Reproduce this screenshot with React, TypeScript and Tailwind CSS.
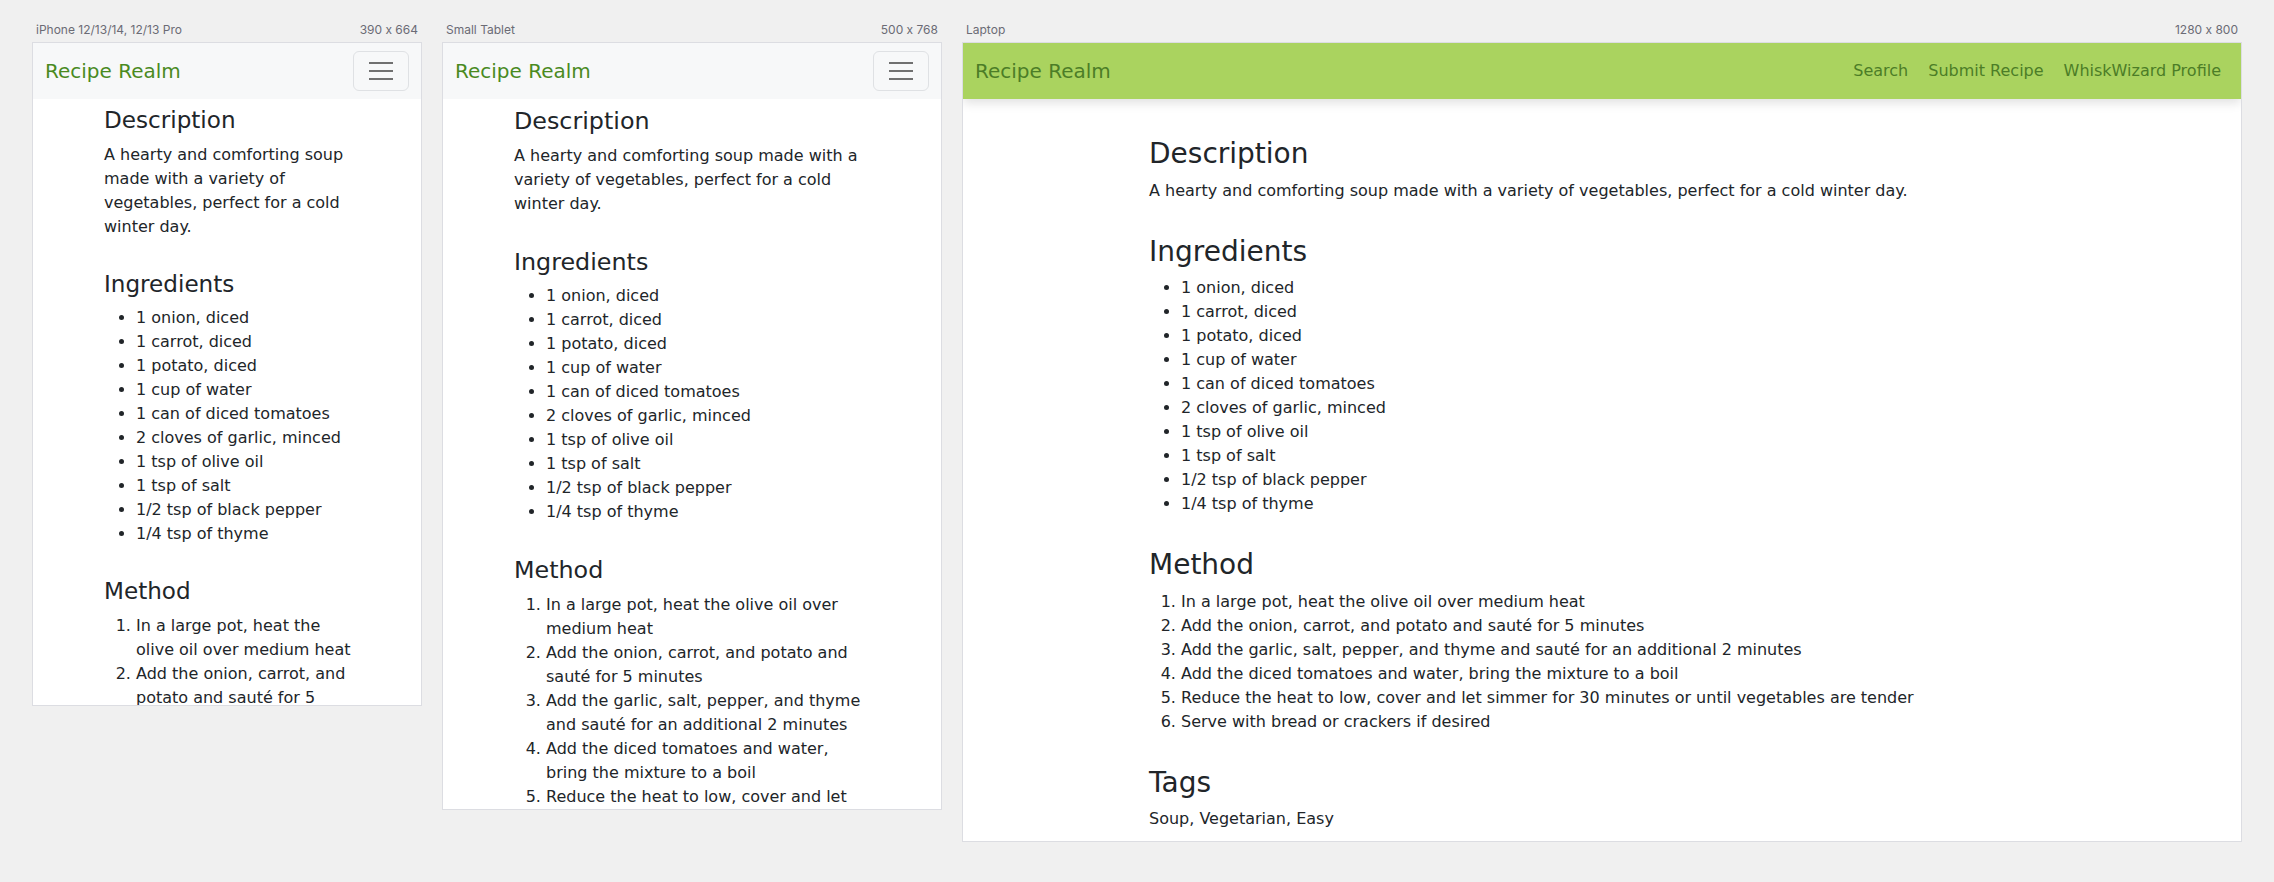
import React from "react";

const INGREDIENTS = [
    "1 onion, diced",
    "1 carrot, diced",
    "1 potato, diced",
    "1 cup of water",
    "1 can of diced tomatoes",
    "2 cloves of garlic, minced",
    "1 tsp of olive oil",
    "1 tsp of salt",
    "1/2 tsp of black pepper",
    "1/4 tsp of thyme",
];

const STEPS = [
    "In a large pot, heat the olive oil over medium heat",
    "Add the onion, carrot, and potato and sauté for 5 minutes",
    "Add the garlic, salt, pepper, and thyme and sauté for an additional 2 minutes",
    "Add the diced tomatoes and water, bring the mixture to a boil",
    "Reduce the heat to low, cover and let simmer for 30 minutes or until vegetables are tender",
    "Serve with bread or crackers if desired",
];

const NAV_LINKS = [ "Search", "Submit Recipe", "WhiskWizard Profile" ];

/**
 * Preview frame with the device name and viewport size above it
 */
function Device(props: { name: string; size: string; frameClass: string; children: React.ReactNode }) {
    return (
        <div className="flex shrink-0 flex-col gap-1">
            {/* calt off, otherwise Inter turns "390 x 664" into a multiplication sign */}
            <div className="flex justify-between px-1 font-['Inter',sans-serif] text-[12px] leading-4 text-[#6b6b75] [font-feature-settings:'calt'_0]">
                <span>{props.name}</span>
                <span>{props.size}</span>
            </div>
            <div className={`overflow-hidden border border-[#dcdde2] bg-white ${props.frameClass}`}>
                {props.children}
            </div>
        </div>
    );
}

function CollapsedNav() {
    return (
        <nav className="flex h-14 items-center justify-between bg-[#f7f8f9] px-3">
            <span className="text-[20px] leading-[30px] text-[#4a8a1f]">Recipe Realm</span>
            <button className="flex h-10 w-14 flex-col items-center justify-center gap-[6px] rounded-md border border-[#dfe1e4]">
                <span className="h-[2px] w-6 bg-[#707070]"/>
                <span className="h-[2px] w-6 bg-[#707070]"/>
                <span className="h-[2px] w-6 bg-[#707070]"/>
            </button>
        </nav>
    );
}

function ExpandedNav() {
    return (
        <nav className="relative z-10 flex h-14 items-center justify-between bg-[#aad35f] px-[10px] shadow-[0_4px_10px_rgba(0,0,0,0.12)]">
            <span className="px-[2px] text-[20px] leading-[30px] text-[#4c7d27]">Recipe Realm</span>
            <div className="flex items-center">
                {NAV_LINKS.map(link => (
                    <a key={link} className="px-[10px] py-2 text-[16px] leading-6 text-[#4c7d27]">{link}</a>
                ))}
            </div>
        </nav>
    );
}

/**
 * Recipe body, shared by all three previews
 */
function Recipe(props: { className: string; headingClass: string }) {
    const heading = `mb-2 font-medium leading-[1.2] ${props.headingClass}`;

    return (
        <main className={`flex flex-col gap-8 text-[16px] leading-6 text-[#212529] ${props.className}`}>
            <section>
                <h3 className={heading}>Description</h3>
                <p>A hearty and comforting soup made with a variety of vegetables, perfect for a cold winter day.</p>
            </section>
            <section>
                <h3 className={heading}>Ingredients</h3>
                <ul className="list-disc pl-8">
                    {INGREDIENTS.map(item => <li key={item}>{item}</li>)}
                </ul>
            </section>
            <section>
                <h3 className={heading}>Method</h3>
                <ol className="list-decimal pl-8">
                    {STEPS.map(step => <li key={step}>{step}</li>)}
                </ol>
            </section>
            <section>
                <h3 className={heading}>Tags</h3>
                <p>Soup, Vegetarian, Easy</p>
            </section>
        </main>
    );
}

export default function App() {
    return (
        <div className="flex min-h-screen items-start gap-5 bg-[#f0f0f0] pl-8 pt-[22px] font-['DejaVu_Sans',sans-serif]">
            <Device name="iPhone 12/13/14, 12/13 Pro" size="390 x 664" frameClass="w-[390px] h-[664px]">
                <CollapsedNav/>
                <Recipe className="pl-[71px] pr-[69px] pt-2" headingClass="text-[23.1px]"/>
            </Device>
            <Device name="Small Tablet" size="500 x 768" frameClass="w-[500px] h-[768px]">
                <CollapsedNav/>
                <Recipe className="px-[71px] pt-2" headingClass="text-[23.8px]"/>
            </Device>
            <Device name="Laptop" size="1280 x 800" frameClass="w-[1280px] h-[800px]">
                <ExpandedNav/>
                <Recipe className="px-[186px] pt-[38px]" headingClass="text-[28px]"/>
            </Device>
        </div>
    );
}
